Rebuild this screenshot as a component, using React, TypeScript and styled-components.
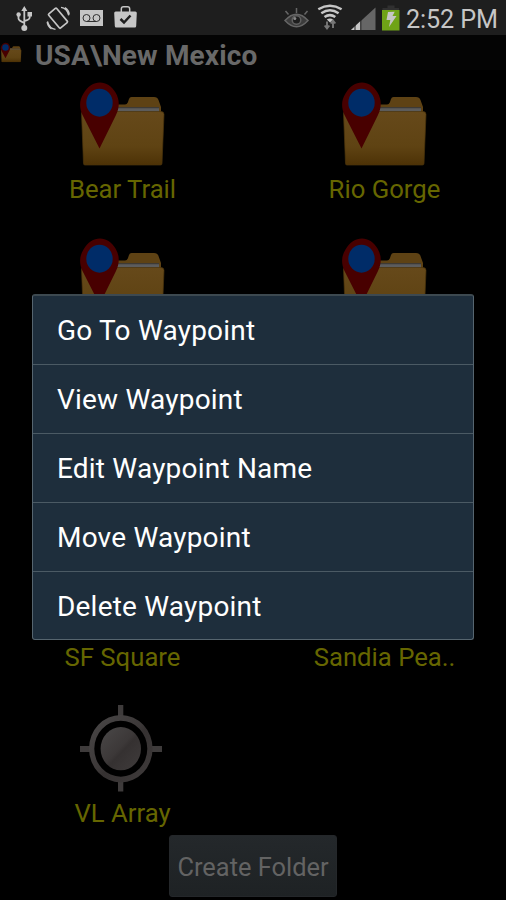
import React from 'react';
import styled, { createGlobalStyle } from 'styled-components';

const GlobalStyle = createGlobalStyle`
  * { box-sizing: border-box; }
  body { margin: 0; background: #000; font-family: Roboto, "Liberation Sans", sans-serif; }
`;

const Screen = styled.main`
  position: relative;
  display: flex;
  flex-direction: column;
  width: 506px;
  height: 900px;
  overflow: hidden;
  background: #000;
`;

const StatusBar = styled.header`
  display: flex;
  justify-content: space-between;
  flex: none;
  height: 35px;
  background: #1e1e1e;
`;

const IconStrip = styled.svg`
  display: block;
  height: 35px;
`;

const StatusRight = styled.div`
  display: flex;
`;

const Clock = styled.time`
  width: 100px;
  height: 35px;
  color: #c6c6c6;
  font-size: 25.2px;
  line-height: 39px;
  letter-spacing: -0.1px;
  white-space: nowrap;
`;

const TitleBar = styled.div`
  display: flex;
  align-items: flex-start;
  flex: none;
  height: 40px;
  background: linear-gradient(#040404 0 35px, #000 35px);
`;

const TitleIcon = styled.svg`
  width: 22px;
  height: 21px;
  margin-top: 7px;
`;

const Title = styled.h1`
  margin: 0 0 0 13px;
  color: #696969;
  font-size: 28px;
  font-weight: 700;
  line-height: 41px;
  letter-spacing: 0.15px;
  white-space: nowrap;
`;

const Grid = styled.section`
  display: grid;
  grid-template-columns: 244px 244px;
  grid-auto-rows: 156px;
  column-gap: 18px;
  padding-top: 4px;
  flex: none;
  height: 760px;
`;

const Cell = styled.div`
  display: flex;
  flex-direction: column;
  align-items: center;
`;

const Art = styled.svg`
  width: 90px;
  height: 90px;
  flex: none;
`;

const Label = styled.span`
  padding-left: 1px;
  color: #666600;
  font-size: 25.7px;
  line-height: 41px;
  white-space: nowrap;
`;

const Footer = styled.footer`
  display: flex;
  justify-content: center;
`;

const FolderButton = styled.button`
  width: 168px;
  height: 62px;
  padding: 2px 0 0;
  border: 1px solid #24272a;
  border-radius: 3px;
  background: linear-gradient(#24282b, #1e2224);
  color: #636363;
  font-family: inherit;
  font-size: 25.4px;
  white-space: nowrap;
`;

const Menu = styled.ul`
  position: absolute;
  left: 32px;
  top: 294px;
  width: 442px;
  height: 346px;
  margin: 0;
  padding: 0;
  list-style: none;
  border: 1px solid #56656f;
  border-top-width: 2px;
  border-top-color: #3d4950;
  border-radius: 3px;
  background: #1e2e3c;
`;

const MenuItem = styled.li`
  height: 69px;
  padding-left: 24px;
  border-bottom: 1px solid #4b5a64;
  color: #fff;
  font-size: 28px;
  line-height: 70px;
  letter-spacing: 0.2px;
  white-space: nowrap;
  &:last-child { height: 67px; border-bottom: 0; }
`;

const FolderShapes = ({ id }: { id: string }) => (
  <>
    <defs>
      <linearGradient id={id} x1="0" y1="0" x2="0" y2="1">
        <stop offset="0" stopColor="#66491a" />
        <stop offset="0.65" stopColor="#5f4313" />
        <stop offset="1" stopColor="#4d3206" />
      </linearGradient>
    </defs>
    <path d="M5 25.500h43q2 0 2.800-2l1.200-3.500q.6-2 2.500-2H77q3.500 0 4.500 3l2.500 7v7H5z" fill="#5e4214" />
    <path d="M34 29h48v5H34z" fill="#5c5c5c" />
    <path d="M34 28h48v1.300H34z" fill="#3e3a34" />
    <path d="M4.500 34.500q0-2 2-2H84q3 0 3 3l-2 49q0 1.500-1.500 1.500H8Q6.500 86 6.500 84.500z" fill={`url(#${id})`} stroke="#4a340c" strokeWidth=".7" />
    <path d="M22.500 69.500 5.500 36C2 28.500 2.300 21 6.500 14.500 14.500-.200 31 0 38.500 13.500 43 21 42.500 28.500 39 36z" fill="#480000" />
    <ellipse cx="22.500" cy="23.700" rx="13.200" ry="14" fill="#002c68" />
  </>
);

const FolderArt = ({ id }: { id: string }) => (
  <Art viewBox="0 0 90 90"><FolderShapes id={id} /></Art>
);

const TargetArt = () => (
  <Art viewBox="0 0 90 90">
    <defs>
      <linearGradient id="metal" x1="0" y1="0" x2="1" y2="1">
        <stop offset="0" stopColor="#4a4848" />
        <stop offset=".48" stopColor="#3c3838" />
        <stop offset=".55" stopColor="#353131" />
        <stop offset="1" stopColor="#403c3c" />
      </linearGradient>
    </defs>
    <path d="M41 2h5.300v12H41zM41 77h5.300v11.500H41zM3 43h11v6H3zM74 43h11v6H74z" fill="#3e3b3b" />
    <g fill="url(#metal)">
      <path fillRule="evenodd" d="M43.800 12a31.800 33.700 0 1 1 0 67.400 31.800 33.700 0 1 1 0-67.400zm0 5.700a26.500 28 0 1 0 0 56 26.500 28 0 1 0 0-56z" />
      <ellipse cx="43.800" cy="45.700" rx="20.200" ry="21.600" />
    </g>
  </Art>
);

const NotificationIcons = () => (
  <IconStrip width="150" viewBox="0 0 150 35" fill="none" stroke="#c6c6c6">
    <path d="M24.300 8v19M18.500 14v4.500q0 2 5.800 4.500M29.700 15v2.500q0 2-5.400 3.700" strokeWidth="1.800" />
    <g fill="#c6c6c6" stroke="none">
      <path d="m24.300 6 3 5h-6zM27.500 12H32v4.500h-4.500z" />
      <circle cx="18.600" cy="14.500" r="2.200" /><circle cx="24.300" cy="28" r="3" />
      <path d="M80 10h23v16H80z" />
      <path d="M114.200 13q0-1.500 1.500-1.500h19.600q1.500 0 1.500 1.500l-.6 13q0 1.500-1.500 1.500h-18.400q-1.500 0-1.500-1.500z" />
    </g>
    <g transform="rotate(-40 58 18.200)" strokeWidth="1.700"><rect x="52.800" y="9" width="10.400" height="18.400" rx="1" /></g>
    <path d="M61 7.300q6 .700 7.700 8M65 7.500q4 2.500 4.300 7M55.500 29.300q-6-.7-8-8M51.500 29q-4-2.500-4.300-7" strokeWidth="1.300" />
    <g stroke="#303030" strokeWidth="1"><circle cx="86.500" cy="18" r="3.500" /><circle cx="96.500" cy="18" r="3.500" /><path d="M86.500 21.500h10" /></g>
    <path d="M121.300 12V9q0-2.200 2.200-2.200h4q2.200 0 2.200 2.200v3" strokeWidth="1.500" />
    <path d="m120.500 19 3.500 3.500 6.500-7" stroke="#1e1e1e" strokeWidth="2.500" />
  </IconStrip>
);

const SystemIcons = () => (
  <IconStrip width="130" viewBox="276 0 130 35" fill="none">
    <g stroke="#666" strokeWidth="1.500">
      <path d="M285 20.500q11.500-12.500 23 0-11.500 12.500-23 0z" fill="#3c3c3c" />
      <path d="M285.500 11l3 3.500M296.500 8v5M307.500 11l-3 3.500" />
      <circle cx="296.500" cy="20" r="4.300" fill="#1e1e1e" stroke="#606060" />
      <circle cx="294.800" cy="18.600" r="1.500" fill="#888" stroke="none" />
    </g>
    <g stroke="#c6c6c6" strokeWidth="2.500">
      <path d="M318.300 9.300q11.700-7 23.300 0M321.300 13.200q8.700-5.800 17.300 0M324.500 17q5.400-3.800 10.800 0" />
      <path d="m326.800 19.500 3.200 3 3.200-3q-3.200-2-6.400 0z" fill="#c6c6c6" stroke="none" />
    </g>
    <path d="M327 21.500v7M324.700 25.500l2.300 3 2.300-3M333 28v-7M330.700 23.500l2.300-3 2.300 3" stroke="#777" strokeWidth="1.900" />
    <path d="M351 30 375.500 7.500V30z" fill="#666" />
    <path d="m351 30 9.500-9V30z" fill="#c6c6c6" /><path d="M355 25v5M360.800 20v10" stroke="#1e1e1e" strokeWidth="1" />
    <path d="M387.500 5.500h7V8h-7zM382.500 8h16.500v2h-16.500z" fill="#303030" />
    <path d="M382 10h17.500v20.500H382z" fill="#6fa317" />
    <path d="m388 12 6.700-.2-2.200 4.200h4l-7.500 11 1.300-7H386.500z" fill="#c6c6c6" />
  </IconStrip>
);

type Entry = { name: string; kind: 'folder' | 'target' };
const entries: Entry[] = [
  { name: 'Bear Trail', kind: 'folder' },
  { name: 'Rio Gorge', kind: 'folder' },
  { name: '', kind: 'folder' },
  { name: '', kind: 'folder' },
  { name: '', kind: 'folder' },
  { name: '', kind: 'folder' },
  { name: 'SF Square', kind: 'target' },
  { name: 'Sandia Pea..', kind: 'target' },
  { name: 'VL Array', kind: 'target' },
];

const actions = [
  'Go To Waypoint',
  'View Waypoint',
  'Edit Waypoint Name',
  'Move Waypoint',
  'Delete Waypoint',
];

export default function App() {
  return (
    <Screen>
      <GlobalStyle />
      <StatusBar>
        <NotificationIcons />
        <StatusRight>
          <SystemIcons />
          <Clock>2:52 PM</Clock>
        </StatusRight>
      </StatusBar>
      <TitleBar>
        <TitleIcon viewBox="0 0 90 90" preserveAspectRatio="none"><FolderShapes id="title-folder" /></TitleIcon>
        <Title>USA\New Mexico</Title>
      </TitleBar>
      <Grid>
        {entries.map((e, i) => (
          <Cell key={i}>
            {e.kind === 'folder' ? <FolderArt id={`folder-${i}`} /> : <TargetArt />}
            <Label>{e.name}</Label>
          </Cell>
        ))}
      </Grid>
      <Footer><FolderButton>Create Folder</FolderButton></Footer>
      <Menu>
        {actions.map((text) => (
          <MenuItem key={text}>{text}</MenuItem>
        ))}
      </Menu>
    </Screen>
  );
}
